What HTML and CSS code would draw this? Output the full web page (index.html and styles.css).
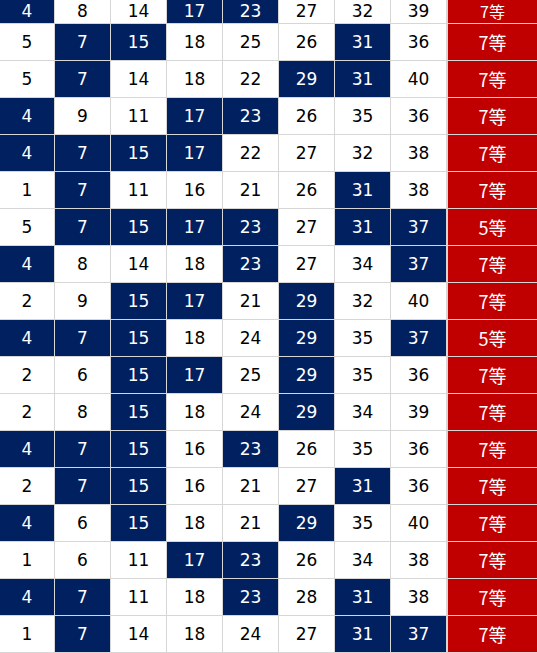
FILE: index.html
```html
<!DOCTYPE html>
<html lang="ja">
<head>
<meta charset="utf-8">
<title>結果</title>
<link rel="stylesheet" href="styles.css">
</head>
<body>
<table class="grid">
<colgroup>
<col class="c1"><col class="cn"><col class="cn"><col class="cn"><col class="cn"><col class="cn"><col class="cn"><col class="c8"><col class="cp">
</colgroup>
<tbody>
<tr class="first"><td class="b">4</td><td>8</td><td>14</td><td class="b">17</td><td class="b">23</td><td>27</td><td>32</td><td>39</td><td class="p">7等</td></tr>
<tr><td>5</td><td class="b">7</td><td class="b">15</td><td>18</td><td>25</td><td>26</td><td class="b">31</td><td>36</td><td class="p">7等</td></tr>
<tr><td>5</td><td class="b">7</td><td>14</td><td>18</td><td>22</td><td class="b">29</td><td class="b">31</td><td>40</td><td class="p">7等</td></tr>
<tr><td class="b">4</td><td>9</td><td>11</td><td class="b">17</td><td class="b">23</td><td>26</td><td>35</td><td>36</td><td class="p">7等</td></tr>
<tr><td class="b">4</td><td class="b">7</td><td class="b">15</td><td class="b">17</td><td>22</td><td>27</td><td>32</td><td>38</td><td class="p">7等</td></tr>
<tr><td>1</td><td class="b">7</td><td>11</td><td>16</td><td>21</td><td>26</td><td class="b">31</td><td>38</td><td class="p">7等</td></tr>
<tr><td>5</td><td class="b">7</td><td class="b">15</td><td class="b">17</td><td class="b">23</td><td>27</td><td class="b">31</td><td class="b">37</td><td class="p">5等</td></tr>
<tr><td class="b">4</td><td>8</td><td>14</td><td>18</td><td class="b">23</td><td>27</td><td>34</td><td class="b">37</td><td class="p">7等</td></tr>
<tr><td>2</td><td>9</td><td class="b">15</td><td class="b">17</td><td>21</td><td class="b">29</td><td>32</td><td>40</td><td class="p">7等</td></tr>
<tr><td class="b">4</td><td class="b">7</td><td class="b">15</td><td>18</td><td>24</td><td class="b">29</td><td>35</td><td class="b">37</td><td class="p">5等</td></tr>
<tr><td>2</td><td>6</td><td class="b">15</td><td class="b">17</td><td>25</td><td class="b">29</td><td>35</td><td>36</td><td class="p">7等</td></tr>
<tr><td>2</td><td>8</td><td class="b">15</td><td>18</td><td>24</td><td class="b">29</td><td>34</td><td>39</td><td class="p">7等</td></tr>
<tr><td class="b">4</td><td class="b">7</td><td class="b">15</td><td>16</td><td class="b">23</td><td>26</td><td>35</td><td>36</td><td class="p">7等</td></tr>
<tr><td>2</td><td class="b">7</td><td class="b">15</td><td>16</td><td>21</td><td>27</td><td class="b">31</td><td>36</td><td class="p">7等</td></tr>
<tr><td class="b">4</td><td>6</td><td class="b">15</td><td>18</td><td>21</td><td class="b">29</td><td>35</td><td>40</td><td class="p">7等</td></tr>
<tr><td>1</td><td>6</td><td>11</td><td class="b">17</td><td class="b">23</td><td>26</td><td>34</td><td>38</td><td class="p">7等</td></tr>
<tr><td class="b">4</td><td class="b">7</td><td>11</td><td>18</td><td class="b">23</td><td>28</td><td class="b">31</td><td>38</td><td class="p">7等</td></tr>
<tr><td>1</td><td class="b">7</td><td>14</td><td>18</td><td>24</td><td>27</td><td class="b">31</td><td class="b">37</td><td class="p">7等</td></tr>
</tbody>
</table>
</body>
</html>
```

FILE: styles.css
```css
html, body {
  margin: 0;
  padding: 0;
  background: #ffffff;
  overflow: hidden;
}

.grid {
  border-collapse: separate;
  border-spacing: 0;
  table-layout: fixed;
  width: 537px;
  font-family: "DejaVu Sans", "Noto Sans CJK JP", sans-serif;
  font-size: 17px;
  color: #000000;
}

.c1 { width: 55px; }
.cn { width: 56px; }
.c8 { width: 57px; }
.cp { width: 89px; }

.grid td {
  height: 36px;
  padding: 0;
  text-align: center;
  vertical-align: middle;
  line-height: 20px;
  border-right: 1px solid #d6d6d6;
  border-bottom: 1px solid #d6d6d6;
  background: #ffffff;
}

.grid td:nth-child(8) {
  border-right: 2px solid #d6d6d6;
}

.grid td:last-child {
  border-right: none;
}

.grid .first td {
  height: 24px;
  line-height: 16px;
  padding-bottom: 2px;
  box-sizing: border-box;
}

.grid td.b {
  background: #002060;
  color: #ffffff;
}

.grid td.p {
  background: #c00000;
  color: #ffffff;
  font-family: "Noto Sans CJK JP", sans-serif;
  font-size: 18px;
}

.grid .first td.p {
  font-size: 16px;
  line-height: 22px;
  padding-bottom: 1px;
}
```
